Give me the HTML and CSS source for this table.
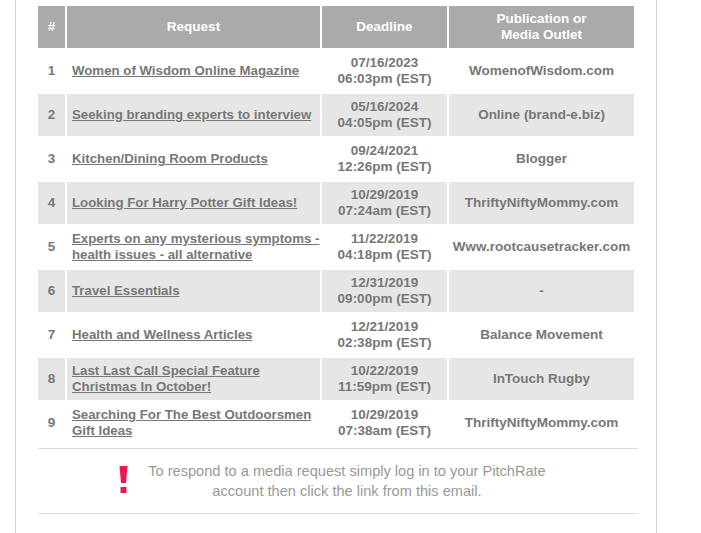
FILE: index.html
```html
<!DOCTYPE html>
<html>
<head>
<meta charset="utf-8">
<link rel="stylesheet" href="styles.css">
</head>
<body>
<div class="wrap">
  <table class="req">
    <colgroup>
      <col class="c-num"><col class="c-req"><col class="c-dl"><col class="c-pub">
    </colgroup>
    <thead>
      <tr><th>#</th><th>Request</th><th>Deadline</th><th>Publication or<br>Media Outlet</th></tr>
    </thead>
    <tbody>
      <tr><td class="num">1</td><td class="title"><a href="#">Women of Wisdom Online Magazine</a></td><td class="dl">07/16/2023<br>06:03pm (EST)</td><td class="pub">WomenofWisdom.com</td></tr>
      <tr class="alt"><td class="num">2</td><td class="title"><a href="#">Seeking branding experts to interview</a></td><td class="dl">05/16/2024<br>04:05pm (EST)</td><td class="pub">Online (brand-e.biz)</td></tr>
      <tr><td class="num">3</td><td class="title"><a href="#">Kitchen/Dining Room Products</a></td><td class="dl">09/24/2021<br>12:26pm (EST)</td><td class="pub">Blogger</td></tr>
      <tr class="alt"><td class="num">4</td><td class="title"><a href="#">Looking For Harry Potter Gift Ideas!</a></td><td class="dl">10/29/2019<br>07:24am (EST)</td><td class="pub">ThriftyNiftyMommy.com</td></tr>
      <tr><td class="num">5</td><td class="title"><a href="#">Experts on any mysterious symptoms - health issues - all alternative</a></td><td class="dl">11/22/2019<br>04:18pm (EST)</td><td class="pub">Www.rootcausetracker.com</td></tr>
      <tr class="alt"><td class="num">6</td><td class="title"><a href="#">Travel Essentials</a></td><td class="dl">12/31/2019<br>09:00pm (EST)</td><td class="pub">-</td></tr>
      <tr><td class="num">7</td><td class="title"><a href="#">Health and Wellness Articles</a></td><td class="dl">12/21/2019<br>02:38pm (EST)</td><td class="pub">Balance Movement</td></tr>
      <tr class="alt"><td class="num">8</td><td class="title"><a href="#">Last Last Call Special Feature Christmas In October!</a></td><td class="dl">10/22/2019<br>11:59pm (EST)</td><td class="pub">InTouch Rugby</td></tr>
      <tr><td class="num">9</td><td class="title"><a href="#">Searching For The Best Outdoorsmen Gift Ideas</a></td><td class="dl">10/29/2019<br>07:38am (EST)</td><td class="pub">ThriftyNiftyMommy.com</td></tr>
    </tbody>
  </table>
  <div class="note">
    <span class="bang" aria-hidden="true">
      <svg width="10" height="28" viewBox="0 0 10 28"><polygon points="0.5,0 8.5,0 7,17 2,17" fill="#f2184f"/><rect x="1.5" y="21" width="6" height="6" fill="#f2184f"/></svg>
    </span>
    <p class="note-text">To respond to a media request simply log in to your PitchRate<br>account then click the link from this email.</p>
  </div>
</div>
</body>
</html>
```
FILE: styles.css
```css
html, body {
  margin: 0;
  padding: 0;
  background: #ffffff;
}
body {
  font-family: "Liberation Sans", Arial, sans-serif;
  color: #777777;
}
.wrap {
  margin-left: 15px;
  width: 642px;
  height: 533px;
  border-left: 1px solid #cfcfcf;
  border-right: 1px solid #cfcfcf;
  padding: 4px 0 0 20px;
  box-sizing: border-box;
}
.req {
  border-collapse: separate;
  border-spacing: 2px;
  table-layout: fixed;
  width: 600px;
  font-size: 13.5px;
  line-height: 16px;
  font-weight: bold;
}
.c-num { width: 27px; }
.c-req { width: 253px; }
.c-dl { width: 125px; }
.c-pub { width: 185px; }
.req th {
  background: #aaaaaa;
  color: #ffffff;
  height: 42px;
  padding: 0;
  text-align: center;
  vertical-align: middle;
  font-weight: bold;
}
.req td {
  height: 42px;
  padding: 0;
  vertical-align: middle;
  color: #777777;
}
.req tr.alt td { background: #e6e6e6; }
.req td.num { text-align: center; }
.req td.title { text-align: left; padding-left: 5px; font-size: 13.25px; }
.req td.title a { color: #777777; text-decoration: underline; }
.req td.dl { text-align: center; }
.req td.pub { text-align: center; }
.note {
  margin: 2px 0 0 2px;
  width: 600px;
  border-top: 1px solid #dddddd;
  border-bottom: 1px solid #dddddd;
  display: flex;
  align-items: flex-start;
  padding: 12px 0 12px 81px;
  box-sizing: border-box;
  height: 66px;
}
.bang {
  display: block;
  width: 10px;
  height: 28px;
  margin-top: 5px;
}
.bang svg { display: block; }
.note-text {
  margin: 0 0 0 13px;
  width: 410px;
  text-align: center;
  font-size: 14.6px;
  line-height: 20px;
  color: #999999;
}
```
